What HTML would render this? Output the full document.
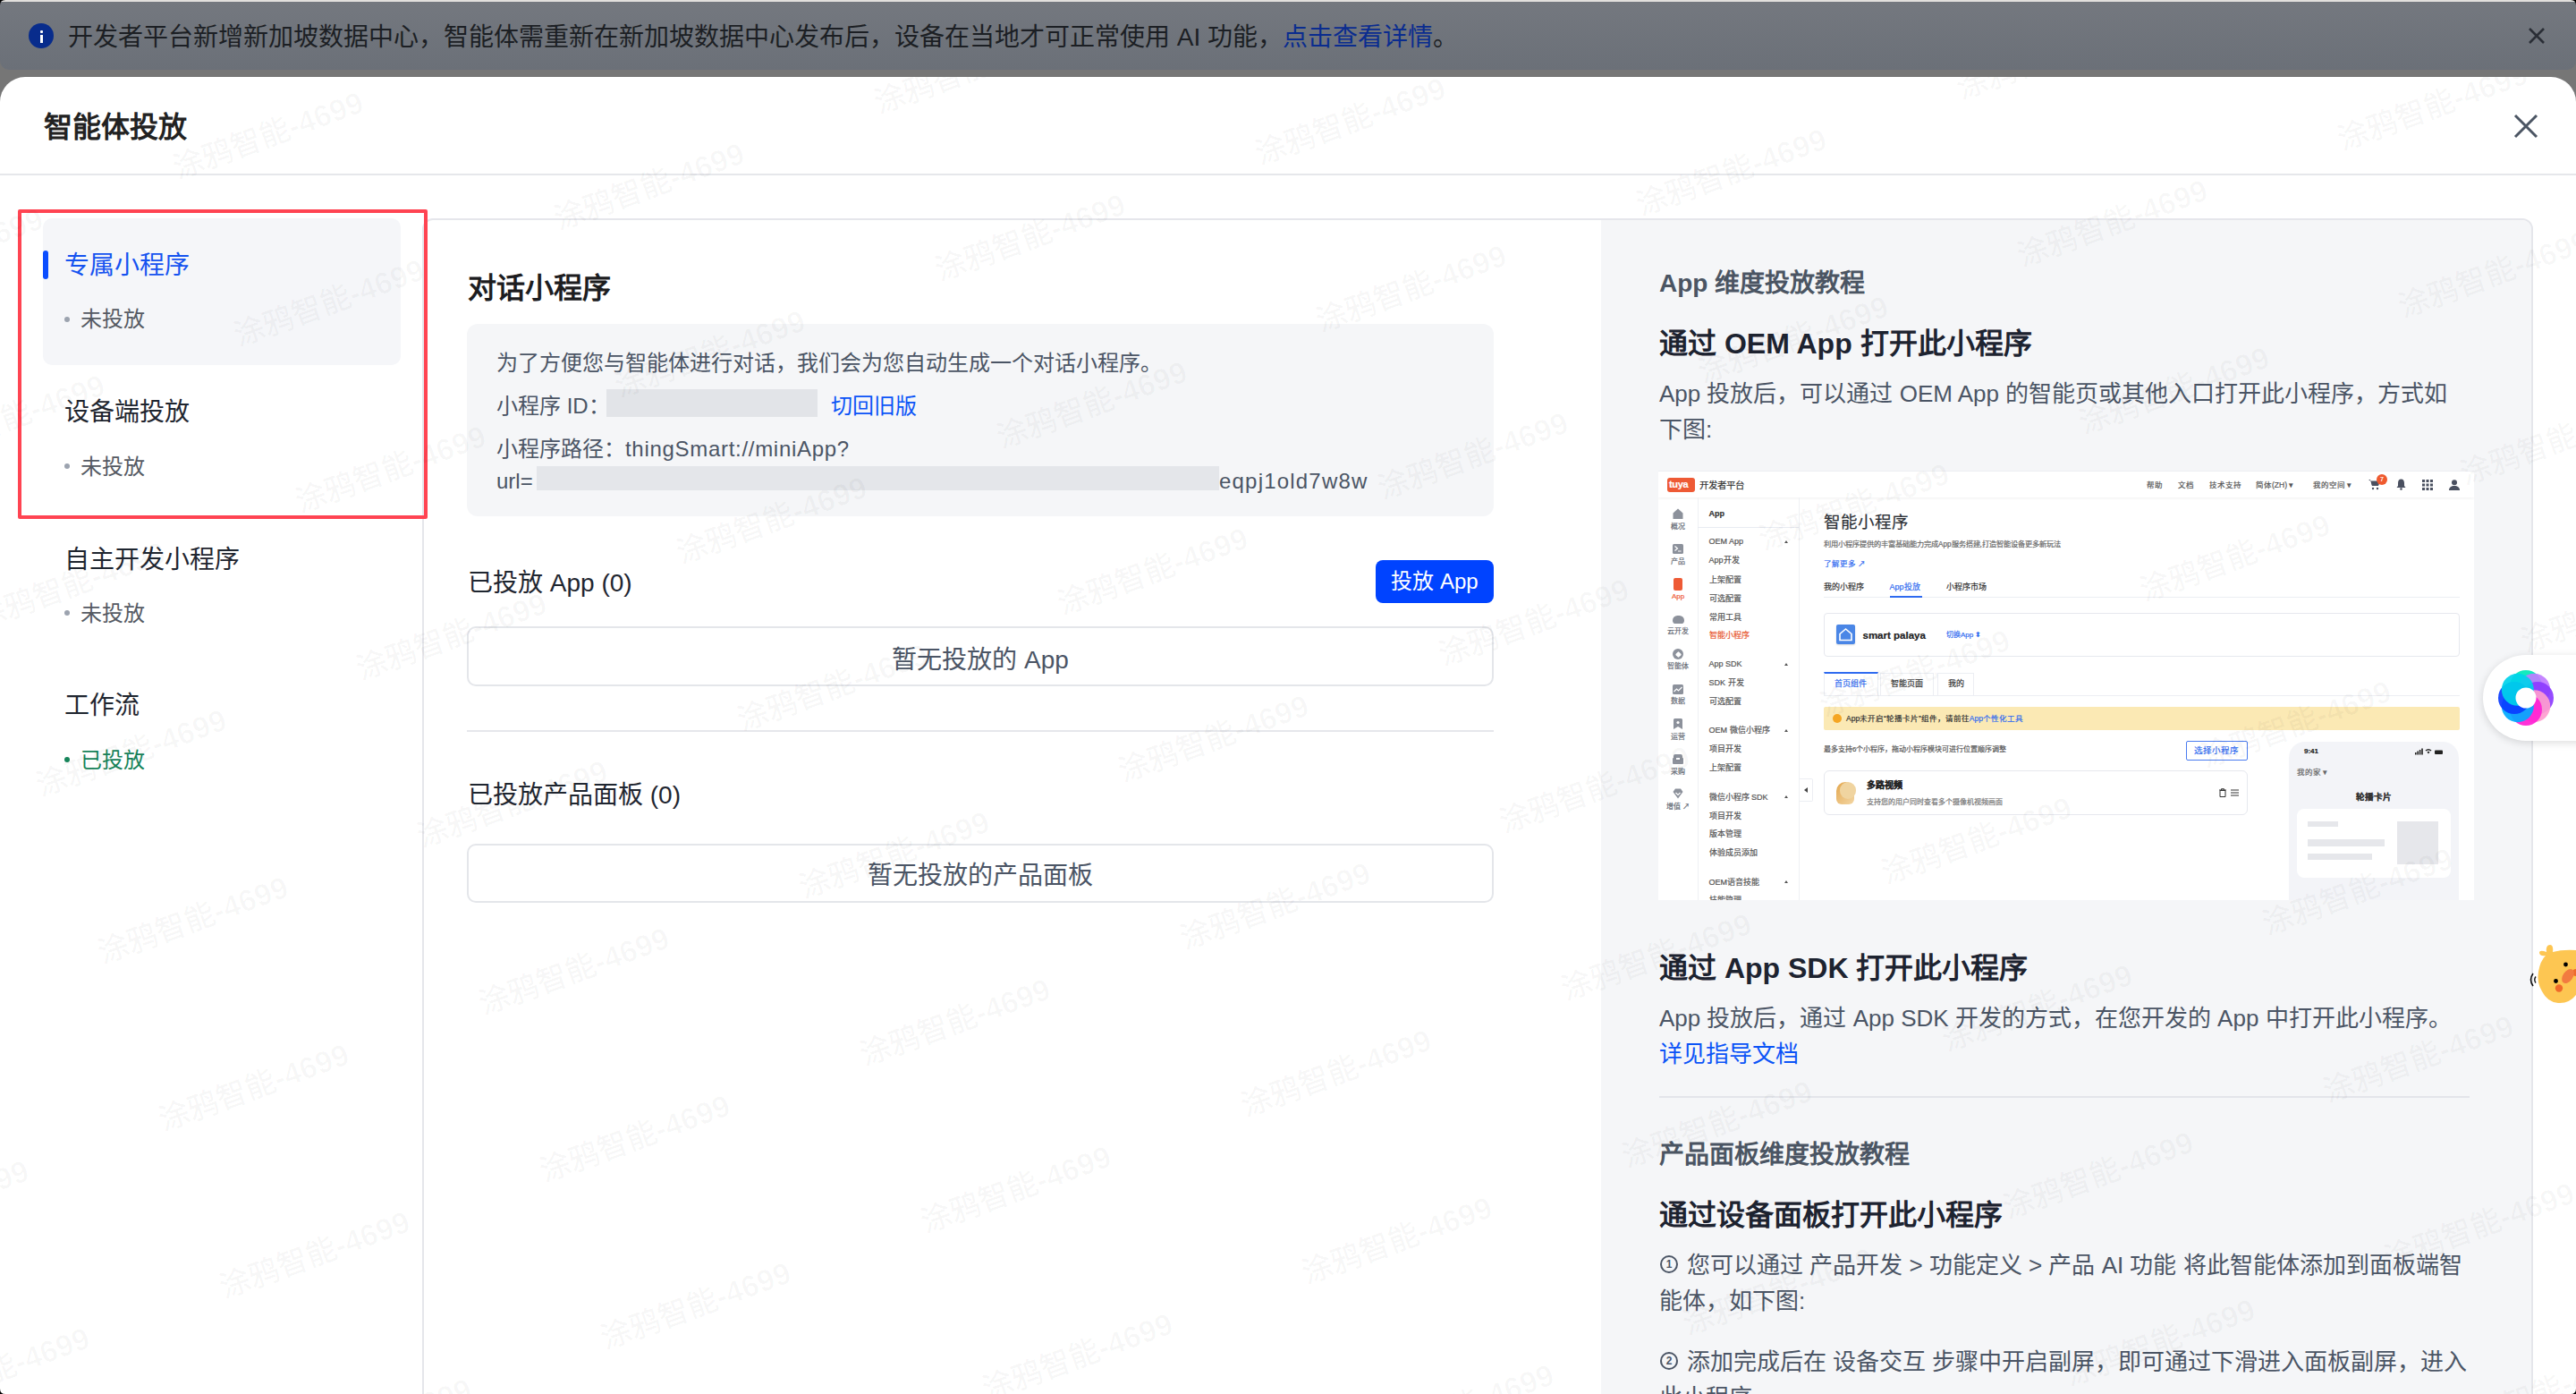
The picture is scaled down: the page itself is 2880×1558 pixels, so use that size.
<!DOCTYPE html>
<html lang="zh-CN">
<head>
<meta charset="utf-8">
<style>
*{box-sizing:border-box;margin:0;padding:0}
html,body{width:2880px;height:1558px;overflow:hidden}
body{position:relative;background:#767676;font-family:"Liberation Sans",sans-serif;color:#1f2630}
.a{position:absolute;white-space:nowrap}
.t40{line-height:40px}
#strip{left:0;top:0;width:2880px;height:3px;background:#e2e0dd}
#banner{left:0;top:2px;width:2880px;height:76px;background:linear-gradient(#74787f,#6b7078);border-radius:0 0 10px 10px}
#modal{left:0;top:86px;width:2880px;height:1472px;background:#fff;border-radius:28px 28px 0 0;overflow:hidden}
.hline{position:absolute;height:2px;background:#e6e7eb}
.nav-t{font-size:28px;line-height:40px;color:#1f2630}
.nav-s{font-size:24px;line-height:40px;color:#555a63}
.dot{position:absolute;width:6px;height:6px;border-radius:3px;background:#9ca3af}
.body24{font-size:24px;line-height:40px;color:#4b5565}
.sec28{font-size:28px;line-height:40px;color:#1f2630}
.empty{position:absolute;left:522px;width:1148px;border:2px solid #e4e6ea;border-radius:10px;background:#fff}
.empty div{position:absolute;left:0;right:0;text-align:center;font-size:28px;line-height:40px;color:#4b5565}
.p26{font-size:26px;line-height:40px;color:#4b5565}
.h32{font-size:32px;line-height:40px;font-weight:bold;color:#1d2330}
.h28{font-size:28px;line-height:40px;font-weight:bold;color:#4b5563}
#shot div{-webkit-text-stroke:0.2px currentColor}
.circ{width:20px;height:20px;border:2.2px solid #4b5565;border-radius:10px;font-size:12px;line-height:16px;text-align:center;color:#4b5565;font-weight:bold}
.wm{position:absolute;width:0;height:0;pointer-events:none}.wm div{position:absolute;left:0;bottom:0;font-size:34px;line-height:34px;white-space:nowrap;transform:rotate(-20deg);transform-origin:0 100%;color:rgba(0,0,0,0.026);font-weight:bold}
</style>
</head>
<body>
<div class="a" id="strip"></div>
<div class="a" id="banner"></div>
<!-- info icon -->
<div class="a" style="left:32px;top:26px;width:28px;height:28px;border-radius:14px;background:#082c8c"></div>
<div class="a" style="left:44.5px;top:34px;width:3px;height:3px;background:#fff;border-radius:1px"></div>
<div class="a" style="left:44.5px;top:38.5px;width:3px;height:9px;background:#fff"></div>
<div class="a t40" style="left:76px;top:22px;font-size:28px;color:#1c1f24">开发者平台新增新加坡数据中心，智能体需重新在新加坡数据中心发布后，设备在当地才可正常使用 AI 功能，<span style="color:#0a2c8f">点击查看详情</span>。</div>
<svg class="a" style="left:2826px;top:30px" width="20" height="20" viewBox="0 0 20 20"><path d="M2 2L18 18M18 2L2 18" stroke="#2a2e36" stroke-width="2.6"/></svg>

<div class="a" id="modal"></div>
<div class="a h32" style="left:49px;top:122px;color:#222">智能体投放</div>
<svg class="a" style="left:2810px;top:127px" width="28" height="28" viewBox="0 0 28 28"><path d="M2 2L26 26M26 2L2 26" stroke="#4b5563" stroke-width="3"/></svg>
<div class="hline" style="left:0;top:194px;width:2880px"></div>

<!-- content card -->
<div class="a" style="left:472px;top:244px;width:2360px;height:1400px;border:2px solid #e5e6eb;border-radius:12px;background:#fff;overflow:hidden">
  <div class="a" style="left:1316px;top:0;width:1044px;height:1400px;background:#f5f6f8"></div>
</div>

<!-- left nav -->
<div class="a" style="left:48px;top:244px;width:400px;height:164px;background:#f5f6f9;border-radius:10px"></div>
<div class="a" style="left:48px;top:280px;width:6px;height:32px;background:#0b4dff;border-radius:3px"></div>
<div class="a nav-t" style="left:72px;top:277px;color:#1553f0">专属小程序</div>
<div class="dot" style="left:72px;top:354px"></div>
<div class="a nav-s" style="left:90px;top:337px">未投放</div>
<div class="a nav-t" style="left:72px;top:441px">设备端投放</div>
<div class="dot" style="left:72px;top:518px"></div>
<div class="a nav-s" style="left:90px;top:502px">未投放</div>
<div class="a nav-t" style="left:72px;top:606px">自主开发小程序</div>
<div class="dot" style="left:72px;top:682px"></div>
<div class="a nav-s" style="left:90px;top:666px">未投放</div>
<div class="a nav-t" style="left:72px;top:769px">工作流</div>
<div class="dot" style="left:72px;top:846px;background:#16845a"></div>
<div class="a nav-s" style="left:90px;top:830px;color:#16845a">已投放</div>

<!-- red annotation -->
<div class="a" style="left:20px;top:234px;width:458px;height:346px;border:4px solid #ff4452;border-radius:2px"></div>

<!-- middle column -->
<div class="a h32" style="left:523px;top:302px;color:#1d1d1f">对话小程序</div>
<div class="a" style="left:522px;top:362px;width:1148px;height:215px;background:#f5f6f8;border-radius:12px"></div>
<div class="a body24" style="left:555px;top:386px">为了方便您与智能体进行对话，我们会为您自动生成一个对话小程序。</div>
<div class="a body24" style="left:555px;top:434px">小程序 ID：</div>
<div class="a" style="left:678px;top:435px;width:236px;height:31px;background:#e2e4e8"></div>
<div class="a body24" style="left:929px;top:434px;color:#0b54f7">切回旧版</div>
<div class="a body24" style="left:555px;top:482px">小程序路径：<span style="letter-spacing:0.7px">thingSmart://miniApp?</span></div>
<div class="a body24" style="left:555px;top:518px">url=</div>
<div class="a" style="left:600px;top:521px;width:763px;height:27px;background:#e4e6ea"></div>
<div class="a body24" style="left:1363px;top:518px;letter-spacing:1.2px">eqpj1old7w8w</div>

<div class="a sec28" style="left:523px;top:632px">已投放 App (0)</div>
<div class="a" style="left:1538px;top:626px;width:132px;height:48px;background:#0043ff;border-radius:8px"></div>
<div class="a" style="left:1538px;top:630px;width:132px;text-align:center;font-size:24px;line-height:40px;color:#fff">投放 App</div>
<div class="empty" style="top:700px;height:67px"><div style="top:16px">暂无投放的 App</div></div>
<div class="hline" style="left:522px;top:816px;width:1148px"></div>
<div class="a sec28" style="left:523px;top:869px">已投放产品面板 (0)</div>
<div class="empty" style="top:943px;height:66px"><div style="top:14px">暂无投放的产品面板</div></div>

<!-- right tutorial -->
<div class="a h28" style="left:1855px;top:297px">App 维度投放教程</div>
<div class="a h32" style="left:1855px;top:364px">通过 OEM App 打开此小程序</div>
<div class="a p26" style="left:1855px;top:420px">App 投放后，可以通过 OEM App 的智能页或其他入口打开此小程序，方式如</div>
<div class="a p26" style="left:1855px;top:460px">下图:</div>


<div id="shot" class="a" style="left:1854px;top:526px;width:912px;height:480px;background:#fff;overflow:hidden;font-size:9px;line-height:12px;color:#555">
  <!-- header -->
  <div class="a" style="left:0;top:0;width:912px;height:30px;background:#fff;box-shadow:0 1px 3px rgba(0,0,0,0.06);border-top:1px solid #eceef2"></div>
  <div class="a" style="left:10px;top:7.5px;width:31px;height:16px;background:#ee5a35;border-radius:3px"></div>
  <div class="a" style="left:12px;top:9px;font-size:11px;line-height:12px;font-weight:bold;color:#fff;letter-spacing:-0.3px">tuya</div>
  <div class="a" style="left:46px;top:10px;font-size:10.5px;line-height:12px;color:#333">开发者平台</div>
  <div class="a" style="left:546px;top:10px;font-size:8.5px;line-height:12px;color:#555">帮助</div>
  <div class="a" style="left:581px;top:10px;font-size:8.5px;line-height:12px;color:#555">文档</div>
  <div class="a" style="left:616px;top:10px;font-size:8.5px;line-height:12px;color:#555">技术支持</div>
  <div class="a" style="left:668px;top:10px;font-size:8.5px;line-height:12px;color:#555">简体(ZH) ▾</div>
  <div class="a" style="left:731.5px;top:10px;font-size:8.5px;line-height:12px;color:#555">我的空间 ▾</div>
  <svg class="a" style="left:794px;top:9px" width="13" height="13" viewBox="0 0 13 13"><path d="M0 1h2l2 7h7l1.5-5H3" fill="#4a5060"/><path d="M2.5 2.5h10l-1.5 5.5H4z" fill="#4a5060"/><circle cx="5" cy="11" r="1.2" fill="#4a5060"/><circle cx="10" cy="11" r="1.2" fill="#4a5060"/></svg>
  <div class="a" style="left:803px;top:4px;width:12px;height:12px;border-radius:6px;background:#ef5a2f;color:#fff;font-size:7px;line-height:12px;text-align:center">7</div>
  <svg class="a" style="left:824.5px;top:9px" width="11" height="13" viewBox="0 0 11 13"><path d="M5.5 0.5C3 0.5 2 2.5 2 5v3L0.5 10h10L9 8V5c0-2.5-1-4.5-3.5-4.5z" fill="#4a5060"/><circle cx="5.5" cy="11.5" r="1.3" fill="#4a5060"/></svg>
  <svg class="a" style="left:854px;top:10px" width="12" height="12" viewBox="0 0 12 12" fill="#4a5060"><rect x="0" y="0" width="3" height="3"/><rect x="4.5" y="0" width="3" height="3"/><rect x="9" y="0" width="3" height="3"/><rect x="0" y="4.5" width="3" height="3"/><rect x="4.5" y="4.5" width="3" height="3"/><rect x="9" y="4.5" width="3" height="3"/><rect x="0" y="9" width="3" height="3"/><rect x="4.5" y="9" width="3" height="3"/><rect x="9" y="9" width="3" height="3"/></svg>
  <svg class="a" style="left:883.5px;top:9.5px" width="12" height="12" viewBox="0 0 12 12" fill="#4a5060"><circle cx="6" cy="3.2" r="3"/><path d="M0 12c0-3.5 2.5-5 6-5s6 1.5 6 5z"/></svg>

  <!-- icon sidebar -->
  <div class="a" style="left:44px;top:30px;width:1px;height:450px;background:#eef0f4"></div>
  <div class="a" style="left:157px;top:30px;width:1px;height:450px;background:#eef0f4"></div>
  <svg class="a" style="left:16px;top:42px" width="12" height="12" viewBox="0 0 12 12"><path d="M6 0.5L0.5 5.5V12h11V5.5z" fill="#8c919b"/></svg>
  <div class="a" style="left:0;width:44px;text-align:center;top:57px;font-size:8px;line-height:12px;color:#666b75">概况</div>
  <div class="a" style="left:16px;top:82px;width:12px;height:11px;background:#8c919b;border-radius:1.5px"></div><svg class="a" style="left:18px;top:84px" width="8" height="7" viewBox="0 0 8 7"><path d="M0.5 0.5l3 2.5-3 2.5M4 6h3.5" stroke="#fff" stroke-width="1.2" fill="none"/></svg>
  <div class="a" style="left:0;width:44px;text-align:center;top:95.5px;font-size:8px;line-height:12px;color:#666b75">产品</div>
  <div class="a" style="left:17px;top:120px;width:10px;height:14px;background:#ee5a35;border-radius:2px"></div>
  <div class="a" style="left:0;width:44px;text-align:center;top:135px;font-size:8px;line-height:12px;color:#ee5a35">App</div>
  <div class="a" style="left:15.5px;top:162px;width:13px;height:9px;background:#8c919b;border-radius:6px 6px 4px 4px"></div>
  <div class="a" style="left:0;width:44px;text-align:center;top:174px;font-size:8px;line-height:12px;color:#666b75">云开发</div>
  <div class="a" style="left:16px;top:199px;width:12px;height:12px;background:#8c919b;border-radius:6px"></div><div class="a" style="left:19.5px;top:202.5px;width:5px;height:5px;background:#fff;transform:rotate(45deg);border-radius:1px"></div>
  <div class="a" style="left:0;width:44px;text-align:center;top:213px;font-size:8px;line-height:12px;color:#666b75">智能体</div>
  <div class="a" style="left:16px;top:239px;width:12px;height:11px;background:#8c919b;border-radius:1.5px"></div><svg class="a" style="left:17px;top:241px" width="10" height="7" viewBox="0 0 10 7"><path d="M0.5 6L3.5 3l2 2L9.5 1" stroke="#fff" stroke-width="1.2" fill="none"/></svg>
  <div class="a" style="left:0;width:44px;text-align:center;top:252.39999999999998px;font-size:8px;line-height:12px;color:#666b75">数据</div>
  <svg class="a" style="left:17px;top:277px" width="10" height="12" viewBox="0 0 10 12"><path d="M0 1.5Q0 0 1.5 0h7Q10 0 10 1.5V12L5 9 0 12z" fill="#8c919b"/><circle cx="5" cy="4.5" r="1.6" fill="#fff"/></svg>
  <div class="a" style="left:0;width:44px;text-align:center;top:291.6px;font-size:8px;line-height:12px;color:#666b75">运营</div>
  <div class="a" style="left:16px;top:321px;width:12px;height:6.600000000000023px;background:#8c919b;border-radius:1px"></div><div class="a" style="left:17px;top:317px;width:10px;height:4px;background:#8c919b;border-radius:2px 2px 0 0"></div><div class="a" style="left:20px;top:321px;width:4px;height:2px;background:#fff"></div>
  <div class="a" style="left:0;width:44px;text-align:center;top:330.7px;font-size:8px;line-height:12px;color:#666b75">采购</div>
  <svg class="a" style="left:16px;top:355.4px" width="12" height="12" viewBox="0 0 12 12"><path d="M3 0.5h6L11.5 4 6 11.5 0.5 4z" fill="#8c919b"/><path d="M3.5 5l2.5 2.5L8.5 5" stroke="#fff" stroke-width="1.2" fill="none"/></svg>
  <div class="a" style="left:0;width:44px;text-align:center;top:369.7px;font-size:8px;line-height:12px;color:#666b75">增值 ↗</div>
  <div class="a" style="left:56.5px;top:41.6px;font-size:9px;line-height:12px;color:#333;font-weight:bold;">App</div>
  <div class="a" style="left:56.5px;top:73px;font-size:9px;line-height:12px;color:#555;">OEM App</div>
  <div class="a" style="left:140.5px;top:77.5px;width:0;height:0;border-left:2.5px solid transparent;border-right:2.5px solid transparent;border-bottom:3px solid #555"></div>
  <div class="a" style="left:56.5px;top:94px;font-size:9px;line-height:12px;color:#555;">App开发</div>
  <div class="a" style="left:56.5px;top:115.5px;font-size:9px;line-height:12px;color:#555;">上架配置</div>
  <div class="a" style="left:56.5px;top:136.6px;font-size:9px;line-height:12px;color:#555;">可选配置</div>
  <div class="a" style="left:56.5px;top:157.7px;font-size:9px;line-height:12px;color:#555;">常用工具</div>
  <div class="a" style="left:56.5px;top:177.6px;font-size:9px;line-height:12px;color:#e8572f;">智能小程序</div>
  <div class="a" style="left:56.5px;top:210px;font-size:9px;line-height:12px;color:#555;">App SDK</div>
  <div class="a" style="left:140.5px;top:214.5px;width:0;height:0;border-left:2.5px solid transparent;border-right:2.5px solid transparent;border-bottom:3px solid #555"></div>
  <div class="a" style="left:56.5px;top:231px;font-size:9px;line-height:12px;color:#555;">SDK 开发</div>
  <div class="a" style="left:56.5px;top:252px;font-size:9px;line-height:12px;color:#555;">可选配置</div>
  <div class="a" style="left:56.5px;top:284px;font-size:9px;line-height:12px;color:#555;">OEM 微信小程序</div>
  <div class="a" style="left:140.5px;top:288.5px;width:0;height:0;border-left:2.5px solid transparent;border-right:2.5px solid transparent;border-bottom:3px solid #555"></div>
  <div class="a" style="left:56.5px;top:305px;font-size:9px;line-height:12px;color:#555;">项目开发</div>
  <div class="a" style="left:56.5px;top:326px;font-size:9px;line-height:12px;color:#555;">上架配置</div>
  <div class="a" style="left:56.5px;top:358.5px;font-size:9px;line-height:12px;color:#555;">微信小程序 SDK</div>
  <div class="a" style="left:140.5px;top:363.0px;width:0;height:0;border-left:2.5px solid transparent;border-right:2.5px solid transparent;border-bottom:3px solid #555"></div>
  <div class="a" style="left:56.5px;top:379.5px;font-size:9px;line-height:12px;color:#555;">项目开发</div>
  <div class="a" style="left:56.5px;top:400.4px;font-size:9px;line-height:12px;color:#555;">版本管理</div>
  <div class="a" style="left:56.5px;top:421.4px;font-size:9px;line-height:12px;color:#555;">体验成员添加</div>
  <div class="a" style="left:56.5px;top:453.5px;font-size:9px;line-height:12px;color:#555;">OEM语音技能</div>
  <div class="a" style="left:140.5px;top:458.0px;width:0;height:0;border-left:2.5px solid transparent;border-right:2.5px solid transparent;border-bottom:3px solid #555"></div>
  <div class="a" style="left:56.5px;top:474px;font-size:9px;line-height:12px;color:#555;">技能管理</div>
  <div class="a" style="left:44px;top:63px;width:113px;height:1px;background:#e8ebf2"></div>
  
  <div class="a" style="left:185px;top:46px;font-size:18.5px;line-height:24px;color:#2e3238">智能小程序</div>
  <div class="a" style="left:185px;top:77px;font-size:8.2px;line-height:12px;color:#666">利用小程序提供的丰富基础能力完成App服务搭建,打造智能设备更多新玩法</div>
  <div class="a" style="left:185px;top:97.5px;font-size:8.5px;line-height:12px;color:#2f6bf0">了解更多 ↗</div>
  <div class="a" style="left:185px;top:123.5px;font-size:9px;line-height:12px;color:#333">我的小程序</div>
  <div class="a" style="left:258.5px;top:123.5px;font-size:9px;line-height:12px;color:#2f6bf0">App投放</div>
  <div class="a" style="left:322px;top:123.5px;font-size:9px;line-height:12px;color:#333">小程序市场</div>
  <div class="a" style="left:185px;top:141px;width:711px;height:1px;background:#eceef3"></div>
  <div class="a" style="left:258.7px;top:139.5px;width:36.5px;height:2px;background:#2f6bf0"></div>

  <div class="a" style="left:185px;top:159px;width:711px;height:49px;border:1px solid #e6e8ee;border-radius:4px"></div>
  <div class="a" style="left:199px;top:172px;width:21px;height:22px;background:#4a86e6;border-radius:2px;box-shadow:0 1px 2px rgba(0,0,0,0.15)"></div>
  <svg class="a" style="left:201px;top:175px" width="17" height="16" viewBox="0 0 17 16"><path d="M2 7.5L8.5 2 15 7.5V14.5H2z" fill="none" stroke="#fff" stroke-width="1.6"/></svg>
  <div class="a" style="left:228.5px;top:177px;font-size:11.5px;line-height:14px;font-weight:bold;color:#222">smart palaya</div>
  <div class="a" style="left:322px;top:178px;font-size:8px;line-height:12px;color:#2f6bf0">切换App ⬍</div>

  <div class="a" style="left:185px;top:224.5px;width:60.5px;height:27px;border:1px solid #eceef3;border-top:2px solid #2f6bf0;border-bottom:none;background:#fff"></div>
  <div class="a" style="left:185px;top:232px;width:60.5px;text-align:center;font-size:9px;line-height:12px;color:#2f6bf0">首页组件</div>
  <div class="a" style="left:248px;top:226px;width:60px;height:25.5px;border:1px solid #eceef3;border-bottom:none"></div>
  <div class="a" style="left:248px;top:232px;width:60px;text-align:center;font-size:9px;line-height:12px;color:#333">智能页面</div>
  <div class="a" style="left:312px;top:226px;width:41px;height:25.5px;border:1px solid #eceef3;border-bottom:none"></div>
  <div class="a" style="left:312px;top:232px;width:41px;text-align:center;font-size:9px;line-height:12px;color:#333">我的</div>
  <div class="a" style="left:185px;top:251px;width:711px;height:1px;background:#eceef3"></div>

  <div class="a" style="left:185px;top:263.5px;width:711px;height:26.5px;background:#fbe9b4;border-radius:2px"></div>
  <div class="a" style="left:195px;top:271.5px;width:10px;height:10px;border-radius:5px;background:#f5a623"></div>
  <div class="a" style="left:210px;top:270.5px;font-size:8.5px;line-height:12px;color:#333">App未开启“轮播卡片”组件，请前往<span style="color:#2f6bf0">App个性化工具</span></div>

  <div class="a" style="left:185px;top:306px;font-size:8px;line-height:12px;color:#555">最多支持6个小程序，拖动小程序模块可进行位置顺序调整</div>
  <div class="a" style="left:589.5px;top:301.5px;width:69px;height:22px;border:1px solid #4a7cf0;border-radius:2px;background:#fff"></div>
  <div class="a" style="left:589.5px;top:306.5px;width:69px;text-align:center;font-size:9.5px;line-height:12px;color:#2f6bf0">选择小程序</div>

  <div class="a" style="left:157.5px;top:343.5px;width:15.5px;height:26.5px;border:1px solid #eceef3;border-left:none;border-radius:0 2px 2px 0;background:#fff"></div>
  <div class="a" style="left:163px;top:354px;width:0;height:0;border-top:3px solid transparent;border-bottom:3px solid transparent;border-right:4px solid #444"></div>

  <div class="a" style="left:184.5px;top:335px;width:474px;height:50px;border:1px solid #e6e8ee;border-radius:6px"></div>
  <div class="a" style="left:198.5px;top:348px;width:20px;height:25px;border-radius:10px 10px 6px 6px;background:linear-gradient(135deg,#e3a64c,#f3d6a4)"></div>
  <div class="a" style="left:203px;top:348px;width:18px;height:19px;border-radius:9px;background:#f0d4a0"></div>
  <div class="a" style="left:233px;top:344.5px;font-size:10px;line-height:13px;font-weight:bold;color:#222">多路视频</div>
  <div class="a" style="left:233px;top:365px;font-size:8px;line-height:12px;color:#777">支持您的用户同时查看多个摄像机视频画面</div>
  <svg class="a" style="left:627px;top:355px" width="8" height="10" viewBox="0 0 8 10"><path d="M1 2.5h6V9.5H1z M0 2h8 M2.5 2V0.7h3V2" fill="none" stroke="#333" stroke-width="1"/></svg>
  <svg class="a" style="left:640px;top:356px" width="9" height="8" viewBox="0 0 9 8"><path d="M0 1h9M0 4h9M0 7h9" stroke="#333" stroke-width="1.1"/></svg>

  <div class="a" style="left:705px;top:302.5px;width:190px;height:200px;background:#f3f4f8;border-radius:18px 18px 0 0"></div>
  <div class="a" style="left:722px;top:308px;font-size:8px;line-height:12px;font-weight:bold;color:#222">9:41</div>
  <svg class="a" style="left:846px;top:310px" width="33" height="8" viewBox="0 0 33 8" fill="#222"><rect x="0" y="5" width="1.6" height="2.5"/><rect x="2.4" y="3.5" width="1.6" height="4"/><rect x="4.8" y="2" width="1.6" height="5.5"/><rect x="7.2" y="0.5" width="1.6" height="7"/><path d="M11.5 2.5Q15 -0.5 18.5 2.5L17.5 3.5Q15 1.5 12.5 3.5z M13.5 4.5Q15 3.2 16.5 4.5L15 6.5z"/><rect x="22" y="2.5" width="9" height="4.5" rx="1"/></svg>
  <div class="a" style="left:714px;top:331px;font-size:8.5px;line-height:12px;color:#666">我的家 ▾</div>
  <div class="a" style="left:705px;top:358.5px;width:190px;text-align:center;font-size:9.5px;line-height:12px;font-weight:bold;color:#333">轮播卡片</div>
  <div class="a" style="left:714px;top:378px;width:172px;height:77px;background:#fff;border-radius:8px"></div>
  <div class="a" style="left:725.5px;top:392px;width:34px;height:5.5px;background:#e6e7eb"></div>
  <div class="a" style="left:725.5px;top:412px;width:86.5px;height:8px;background:#e6e7eb"></div>
  <div class="a" style="left:725.5px;top:427.5px;width:72px;height:7.5px;background:#e6e7eb"></div>
  <div class="a" style="left:826px;top:392px;width:46px;height:48px;background:#e6e7eb"></div>

</div>


<div class="a h32" style="left:1855px;top:1062px">通过 App SDK 打开此小程序</div>
<div class="a p26" style="left:1855px;top:1118px">App 投放后，通过 App SDK 开发的方式，在您开发的 App 中打开此小程序。</div>
<div class="a p26" style="left:1855px;top:1158px;color:#0b54f7">详见指导文档</div>
<div class="hline" style="left:1855px;top:1225px;width:906px;background:#e3e5ea"></div>
<div class="a h28" style="left:1855px;top:1271px">产品面板维度投放教程</div>
<div class="a h32" style="left:1855px;top:1338px">通过设备面板打开此小程序</div>
<div class="a circ" style="left:1856px;top:1403px">1</div><div class="a p26" style="left:1886px;top:1394px">您可以通过 产品开发 &gt; 功能定义 &gt; 产品 AI 功能 将此智能体添加到面板端智</div>
<div class="a p26" style="left:1855px;top:1434px">能体，如下图:</div>
<div class="a circ" style="left:1856px;top:1511px">2</div><div class="a p26" style="left:1886px;top:1502px">添加完成后在 设备交互 步骤中开启副屏，即可通过下滑进入面板副屏，进入</div>
<div class="a p26" style="left:1855px;top:1542px">此小程序</div>


<!-- watermark -->
<div class="a" style="left:0;top:86px;width:2880px;height:1472px;overflow:hidden;pointer-events:none">
<div class="wm" style="left:-241.3px;top:1126.0px"><div>涂鸦智能-4699</div></div>
<div class="wm" style="left:-172.9px;top:1312.9px"><div>涂鸦智能-4699</div></div>
<div class="wm" style="left:-104.6px;top:1499.8px"><div>涂鸦智能-4699</div></div>
<div class="wm" style="left:-225.2px;top:61.6px"><div>涂鸦智能-4699</div></div>
<div class="wm" style="left:-156.9px;top:248.5px"><div>涂鸦智能-4699</div></div>
<div class="wm" style="left:-88.5px;top:435.4px"><div>涂鸦智能-4699</div></div>
<div class="wm" style="left:-20.2px;top:622.3px"><div>涂鸦智能-4699</div></div>
<div class="wm" style="left:48.2px;top:809.2px"><div>涂鸦智能-4699</div></div>
<div class="wm" style="left:116.5px;top:996.1px"><div>涂鸦智能-4699</div></div>
<div class="wm" style="left:184.9px;top:1183.0px"><div>涂鸦智能-4699</div></div>
<div class="wm" style="left:253.2px;top:1369.9px"><div>涂鸦智能-4699</div></div>
<div class="wm" style="left:321.6px;top:1556.8px"><div>涂鸦智能-4699</div></div>
<div class="wm" style="left:200.9px;top:118.6px"><div>涂鸦智能-4699</div></div>
<div class="wm" style="left:269.2px;top:305.5px"><div>涂鸦智能-4699</div></div>
<div class="wm" style="left:337.6px;top:492.4px"><div>涂鸦智能-4699</div></div>
<div class="wm" style="left:406.0px;top:679.3px"><div>涂鸦智能-4699</div></div>
<div class="wm" style="left:474.3px;top:866.2px"><div>涂鸦智能-4699</div></div>
<div class="wm" style="left:542.6px;top:1053.1px"><div>涂鸦智能-4699</div></div>
<div class="wm" style="left:611.0px;top:1240.0px"><div>涂鸦智能-4699</div></div>
<div class="wm" style="left:679.4px;top:1426.9px"><div>涂鸦智能-4699</div></div>
<div class="wm" style="left:627.1px;top:175.6px"><div>涂鸦智能-4699</div></div>
<div class="wm" style="left:695.4px;top:362.5px"><div>涂鸦智能-4699</div></div>
<div class="wm" style="left:763.8px;top:549.4px"><div>涂鸦智能-4699</div></div>
<div class="wm" style="left:832.1px;top:736.3px"><div>涂鸦智能-4699</div></div>
<div class="wm" style="left:900.5px;top:923.2px"><div>涂鸦智能-4699</div></div>
<div class="wm" style="left:968.8px;top:1110.1px"><div>涂鸦智能-4699</div></div>
<div class="wm" style="left:1037.2px;top:1297.0px"><div>涂鸦智能-4699</div></div>
<div class="wm" style="left:1105.5px;top:1483.9px"><div>涂鸦智能-4699</div></div>
<div class="wm" style="left:984.9px;top:45.7px"><div>涂鸦智能-4699</div></div>
<div class="wm" style="left:1053.2px;top:232.6px"><div>涂鸦智能-4699</div></div>
<div class="wm" style="left:1121.5px;top:419.5px"><div>涂鸦智能-4699</div></div>
<div class="wm" style="left:1189.9px;top:606.4px"><div>涂鸦智能-4699</div></div>
<div class="wm" style="left:1258.2px;top:793.3px"><div>涂鸦智能-4699</div></div>
<div class="wm" style="left:1326.6px;top:980.2px"><div>涂鸦智能-4699</div></div>
<div class="wm" style="left:1395.0px;top:1167.1px"><div>涂鸦智能-4699</div></div>
<div class="wm" style="left:1463.3px;top:1354.0px"><div>涂鸦智能-4699</div></div>
<div class="wm" style="left:1531.6px;top:1540.9px"><div>涂鸦智能-4699</div></div>
<div class="wm" style="left:1411.0px;top:102.7px"><div>涂鸦智能-4699</div></div>
<div class="wm" style="left:1479.3px;top:289.6px"><div>涂鸦智能-4699</div></div>
<div class="wm" style="left:1547.7px;top:476.5px"><div>涂鸦智能-4699</div></div>
<div class="wm" style="left:1616.0px;top:663.4px"><div>涂鸦智能-4699</div></div>
<div class="wm" style="left:1684.4px;top:850.3px"><div>涂鸦智能-4699</div></div>
<div class="wm" style="left:1752.7px;top:1037.2px"><div>涂鸦智能-4699</div></div>
<div class="wm" style="left:1821.1px;top:1224.1px"><div>涂鸦智能-4699</div></div>
<div class="wm" style="left:1889.4px;top:1411.0px"><div>涂鸦智能-4699</div></div>
<div class="wm" style="left:1837.2px;top:159.7px"><div>涂鸦智能-4699</div></div>
<div class="wm" style="left:1905.5px;top:346.6px"><div>涂鸦智能-4699</div></div>
<div class="wm" style="left:1973.8px;top:533.5px"><div>涂鸦智能-4699</div></div>
<div class="wm" style="left:2042.2px;top:720.4px"><div>涂鸦智能-4699</div></div>
<div class="wm" style="left:2110.5px;top:907.3px"><div>涂鸦智能-4699</div></div>
<div class="wm" style="left:2178.9px;top:1094.2px"><div>涂鸦智能-4699</div></div>
<div class="wm" style="left:2247.2px;top:1281.1px"><div>涂鸦智能-4699</div></div>
<div class="wm" style="left:2315.6px;top:1468.0px"><div>涂鸦智能-4699</div></div>
<div class="wm" style="left:2194.9px;top:29.8px"><div>涂鸦智能-4699</div></div>
<div class="wm" style="left:2263.3px;top:216.7px"><div>涂鸦智能-4699</div></div>
<div class="wm" style="left:2331.7px;top:403.6px"><div>涂鸦智能-4699</div></div>
<div class="wm" style="left:2400.0px;top:590.5px"><div>涂鸦智能-4699</div></div>
<div class="wm" style="left:2468.3px;top:777.4px"><div>涂鸦智能-4699</div></div>
<div class="wm" style="left:2536.7px;top:964.3px"><div>涂鸦智能-4699</div></div>
<div class="wm" style="left:2605.1px;top:1151.2px"><div>涂鸦智能-4699</div></div>
<div class="wm" style="left:2673.4px;top:1338.1px"><div>涂鸦智能-4699</div></div>
<div class="wm" style="left:2741.8px;top:1525.0px"><div>涂鸦智能-4699</div></div>
<div class="wm" style="left:2621.1px;top:86.8px"><div>涂鸦智能-4699</div></div>
<div class="wm" style="left:2689.4px;top:273.7px"><div>涂鸦智能-4699</div></div>
<div class="wm" style="left:2757.8px;top:460.6px"><div>涂鸦智能-4699</div></div>
<div class="wm" style="left:2826.1px;top:647.5px"><div>涂鸦智能-4699</div></div>
</div>
<!-- floating assistant pill -->
<div class="a" style="left:2776px;top:732px;width:200px;height:96px;border-radius:48px;background:#fff;box-shadow:0 2px 10px rgba(0,0,0,0.14)"></div>
<svg class="a" style="left:2790px;top:746px" width="68" height="68" viewBox="0 0 68 68"><defs><clipPath id="lc"><circle cx="34" cy="34" r="32.5"/></clipPath></defs><g clip-path="url(#lc)"><circle cx="34.00" cy="21.00" r="18" fill="#00e8b8" fill-opacity="0.92"/><circle cx="43.19" cy="24.81" r="18" fill="#c07cff" fill-opacity="0.92"/><circle cx="47.00" cy="34.00" r="18" fill="#8c3cff" fill-opacity="0.92"/><circle cx="43.19" cy="43.19" r="18" fill="#ff9ccf" fill-opacity="0.92"/><circle cx="34.00" cy="47.00" r="18" fill="#ff20d4" fill-opacity="0.92"/><circle cx="24.81" cy="43.19" r="18" fill="#00aaff" fill-opacity="0.92"/><circle cx="21.00" cy="34.00" r="18" fill="#0a3cff" fill-opacity="0.92"/><circle cx="24.81" cy="24.81" r="18" fill="#00d2ea" fill-opacity="0.92"/></g><circle cx="34" cy="34" r="11.5" fill="#fff"/></svg>
<!-- chick -->
<svg class="a" style="left:2820px;top:1050px" width="60" height="80" viewBox="0 0 60 80">
  <path d="M27 14 Q26 6 31 6 Q35 6 34 14 Q45 11 60 12 V62 Q52 72 40 71 Q28 70 22 58 Q16 48 18 36 Q20 24 26 18 Q20 19 19 15 Q19 11 27 14z" fill="#fdc652"/>
  <circle cx="48.5" cy="28" r="2.4" fill="#000"/>
  <circle cx="37.5" cy="46.5" r="2.4" fill="#000"/>
  <circle cx="41" cy="54.5" r="4.2" fill="#ef6a2a"/>
  <circle cx="60" cy="37" r="4" fill="#ef6a2a"/>
  <ellipse cx="51" cy="41" rx="5.5" ry="9" transform="rotate(35 51 41)" fill="#f27b40"/>
  <path d="M12 38 Q7 45 12 52" stroke="#111" stroke-width="1.6" fill="none"/>
  <path d="M15 41.5 Q12.5 45 15 48.5" stroke="#111" stroke-width="1.4" fill="none"/>
</svg>
<!-- screen corners -->
<svg class="a" style="left:0;top:0" width="6" height="6"><path d="M0 0H6Q0 0 0 6z" fill="#000"/></svg>
<svg class="a" style="left:2874px;top:0" width="6" height="6"><path d="M6 0H0Q6 0 6 6z" fill="#000"/></svg>
<svg class="a" style="left:0;top:1552px" width="6" height="6"><path d="M0 6H6Q0 6 0 0z" fill="#000"/></svg>
<svg class="a" style="left:2874px;top:1552px" width="6" height="6"><path d="M6 6H0Q6 6 6 0z" fill="#000"/></svg>
</body>
</html>
